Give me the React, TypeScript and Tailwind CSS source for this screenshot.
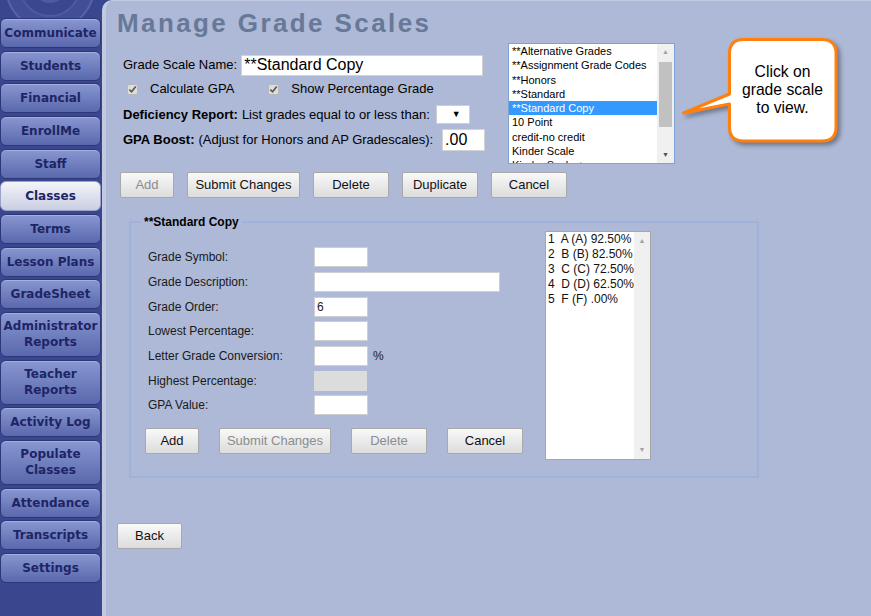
import React from "react";

type Tab = { label: string; lines?: string[]; active?: boolean };

const TABS: Tab[] = [
  { label: "Communicate" },
  { label: "Students" },
  { label: "Financial" },
  { label: "EnrollMe" },
  { label: "Staff" },
  { label: "Classes", active: true },
  { label: "Terms" },
  { label: "Lesson Plans" },
  { label: "GradeSheet" },
  { label: "Administrator Reports", lines: ["Administrator", "Reports"] },
  { label: "Teacher Reports", lines: ["Teacher", "Reports"] },
  { label: "Activity Log" },
  { label: "Populate Classes", lines: ["Populate", "Classes"] },
  { label: "Attendance" },
  { label: "Transcripts" },
  { label: "Settings" },
];

const SCALES = [
  "**Alternative Grades",
  "**Assignment Grade Codes",
  "**Honors",
  "**Standard",
  "**Standard Copy",
  "10 Point",
  "credit-no credit",
  "Kinder Scale",
  "Kinder Scale +",
];

const GRADES = ["1  A (A) 92.50%", "2  B (B) 82.50%", "3  C (C) 72.50%", "4  D (D) 62.50%", "5  F (F) .00%"];

const FIELDS: { label: string; w: number; value?: string; disabled?: boolean; suffix?: string }[] = [
  { label: "Grade Symbol:", w: 54 },
  { label: "Grade Description:", w: 186 },
  { label: "Grade Order:", w: 54, value: "6" },
  { label: "Lowest Percentage:", w: 54 },
  { label: "Letter Grade Conversion:", w: 54, suffix: "%" },
  { label: "Highest Percentage:", w: 53, disabled: true },
  { label: "GPA Value:", w: 54 },
];

function Btn({ children, w, disabled }: { children: React.ReactNode; w: number; disabled?: boolean }) {
  return (
    <button
      type="button"
      style={{ width: w }}
      className={`h-[26px] shrink-0 rounded-[2px] border border-[#a9a9a9] bg-linear-to-b from-[#f9f9f9] to-[#dcdcdc] text-[13px] ${
        disabled ? "text-[#8c8c8c]" : "text-[#111]"
      }`}
    >
      {children}
    </button>
  );
}

function Check() {
  return (
    <span className="flex h-[11px] w-[11px] shrink-0 items-center justify-center rounded-[2px] border border-[#b8b8b8] bg-[#dedede]">
      <svg viewBox="0 0 10 10" className="h-[9px] w-[9px]">
        <path d="M1.5 5.2 L4 7.6 L8.6 1.8" fill="none" stroke="#555" strokeWidth="1.8" />
      </svg>
    </span>
  );
}

function Sidebar() {
  return (
    <aside className="flex w-[102px] shrink-0 flex-col bg-[#3a478e] font-['DejaVu_Sans',Verdana,sans-serif]">
      <svg viewBox="0 0 102 18" className="h-[18px] w-[102px] shrink-0">
        <circle cx="50" cy="-14" r="44" fill="#414f98" stroke="#5664ab" strokeWidth="2" />
        <circle cx="50" cy="-14" r="30" fill="#3b4890" stroke="#4c5aa2" strokeWidth="2" />
        <circle cx="50" cy="-14" r="17" fill="#4d5ba3" />
      </svg>
      <nav className="flex flex-col gap-[2.67px]">
        {TABS.map((t) => (
          <div
            key={t.label}
            className={`flex w-[101px] flex-col items-center justify-center rounded-[6px] border text-center text-[12px] font-bold leading-[16px] text-[#1e2566] ${
              t.lines ? "h-[45px]" : "h-[30px]"
            } ${
              t.active
                ? "border-[#9aa3c6] bg-linear-to-b from-[#f4f5fa] to-[#c9cee2]"
                : "border-[#2c3777] bg-linear-to-b from-[#8897d0] to-[#5a68ad] shadow-[inset_0_1px_0_#a3b0e0]"
            }`}
          >
            {(t.lines ?? [t.label]).map((l) => (
              <span key={l}>{l}</span>
            ))}
          </div>
        ))}
      </nav>
    </aside>
  );
}

export default function App() {
  return (
    <div className="flex h-[616px] w-full overflow-hidden bg-[#3a478e]">
      <Sidebar />
      <main className="relative flex-1 rounded-tl-[10px] border-l-4 border-t border-[#c2cae1] bg-[#adb9d6] pl-[11px] pt-[7px] font-['Liberation_Sans',Arial,sans-serif] text-black">
        <h1 className="text-[26px] font-bold leading-[30px] tracking-[2.4px] text-[#687898]">Manage Grade Scales</h1>

        {/* scale header */}
        <div className="mt-[5px] flex">
          <div className="w-[391px] shrink-0 pl-[6px] pt-[11px] text-[13px]">
            <div className="flex h-[22px] items-center">
              <span>Grade Scale Name:</span>
              <div className="ml-[4px] flex h-[21px] w-[242px] items-center border border-[#d2d2d2] bg-white pl-[2px] text-[16px]">
                **Standard Copy
              </div>
            </div>
            <div className="flex h-[26px] items-center">
              <span className="ml-[4px]">
                <Check />
              </span>
              <span className="ml-[12px]">Calculate GPA</span>
              <span className="ml-[34px]">
                <Check />
              </span>
              <span className="ml-[12px]">Show Percentage Grade</span>
            </div>
            <div className="flex h-[25px] items-center">
              <span className="font-bold">Deficiency Report:</span>
              <span className="ml-[4px]">List grades equal to or less than:</span>
              <div className="ml-[6px] flex h-[19px] w-[34px] items-center justify-end border border-[#cfcfcf] bg-white pr-[8px] text-[9px]">
                ▼
              </div>
            </div>
            <div className="flex h-[25px] items-center">
              <span className="font-bold">GPA Boost:</span>
              <span className="ml-[4px]">(Adjust for Honors and AP Gradescales):</span>
              <div className="ml-[9px] flex h-[22px] w-[43px] items-center border border-[#d2d2d2] bg-white pl-[2px] text-[16px]">
                .00
              </div>
            </div>
          </div>

          <div className="flex h-[121px] w-[167px] overflow-hidden border border-[#7da2d0] bg-white text-[11px]">
            <div className="flex-1 overflow-hidden">
              {SCALES.map((s) => (
                <div
                  key={s}
                  className={`h-[14.3px] whitespace-nowrap pl-[3px] leading-[14.3px] ${
                    s === "**Standard Copy" ? "bg-[#3399ff] text-white" : ""
                  }`}
                >
                  {s}
                </div>
              ))}
            </div>
            <div className="flex w-[17px] shrink-0 flex-col items-center bg-[#f0f0f0]">
              <span className="mt-[4px] text-[7px] leading-[8px] text-[#a3a3a3]">▲</span>
              <div className="mt-[6px] h-[65px] w-[13px] bg-[#c1c1c1]" />
              <span className="mt-auto mb-[4px] text-[7px] leading-[8px] text-[#505050]">▼</span>
            </div>
          </div>
        </div>

        <div className="mt-[8px] flex gap-[13px] pl-[3px]">
          <Btn w={54} disabled>
            Add
          </Btn>
          <Btn w={113}>Submit Changes</Btn>
          <Btn w={76}>Delete</Btn>
          <Btn w={76}>Duplicate</Btn>
          <Btn w={76}>Cancel</Btn>
        </div>

        {/* grade entries */}
        <fieldset className="ml-[12px] mt-[17px] h-[263px] w-[630px] border-2 border-[#a0b1da]">
          <legend className="ml-[10px] px-[3px] text-[12px] font-bold leading-[14px]">**Standard Copy</legend>
          <div className="flex pt-[2px]">
            <div className="w-[414px] shrink-0 pl-[14px] pt-[14px] text-[12px] text-[#1a1a1a]">
              {FIELDS.map((f) => (
                <div key={f.label} className="flex h-[24.67px] items-center pl-[3px]">
                  <span className="w-[166px] shrink-0">{f.label}</span>
                  <div
                    style={{ width: f.w }}
                    className={`flex h-[20px] items-center pl-[2px] ${
                      f.disabled ? "bg-[#dcdcdc]" : "border border-[#cfcfcf] bg-white"
                    }`}
                  >
                    {f.value}
                  </div>
                  {f.suffix && <span className="ml-[5px]">{f.suffix}</span>}
                </div>
              ))}
              <div className="mt-[10px] flex gap-[20px]">
                <Btn w={54}>Add</Btn>
                <Btn w={112} disabled>
                  Submit Changes
                </Btn>
                <Btn w={76} disabled>
                  Delete
                </Btn>
                <Btn w={76}>Cancel</Btn>
              </div>
            </div>

            <div className="flex h-[229px] w-[106px] border border-[#a6a6a6] bg-white text-[12px] text-[#111]">
              <div className="flex-1 pl-[2px]">
                {GRADES.map((g) => (
                  <div key={g} className="h-[15px] whitespace-pre leading-[15px]">
                    {g}
                  </div>
                ))}
              </div>
              <div className="flex w-[16px] shrink-0 flex-col items-center bg-[#f0f0f0]">
                <span className="mt-[5px] text-[7px] leading-[8px] text-[#a3a3a3]">▲</span>
                <span className="mt-auto mb-[5px] text-[7px] leading-[8px] text-[#a3a3a3]">▼</span>
              </div>
            </div>
          </div>
        </fieldset>

        <div className="mt-[45px]">
          <Btn w={65}>Back</Btn>
        </div>

        {/* callout */}
        <svg
          viewBox="680 34 170 120"
          className="absolute left-[574px] top-[33px] h-[120px] w-[170px] drop-shadow-[3px_3px_2px_rgba(0,0,0,0.35)]"
        >
          <path
            d="M743.5 39.5 H822 Q836 39.5 836 53.5 V127 Q836 141 822 141 H743.5 Q729.5 141 729.5 127 V104 L683.5 113 L729.5 94 V53.5 Q729.5 39.5 743.5 39.5 Z"
            fill="#fff"
            stroke="#ff7f0f"
            strokeWidth="3"
            strokeLinejoin="round"
          />
        </svg>
        <div className="absolute left-[623px] top-[62px] w-[107px] text-center text-[15.7px] leading-[18px]">
          Click on
          <br />
          grade scale
          <br />
          to view.
        </div>
      </main>
    </div>
  );
}
